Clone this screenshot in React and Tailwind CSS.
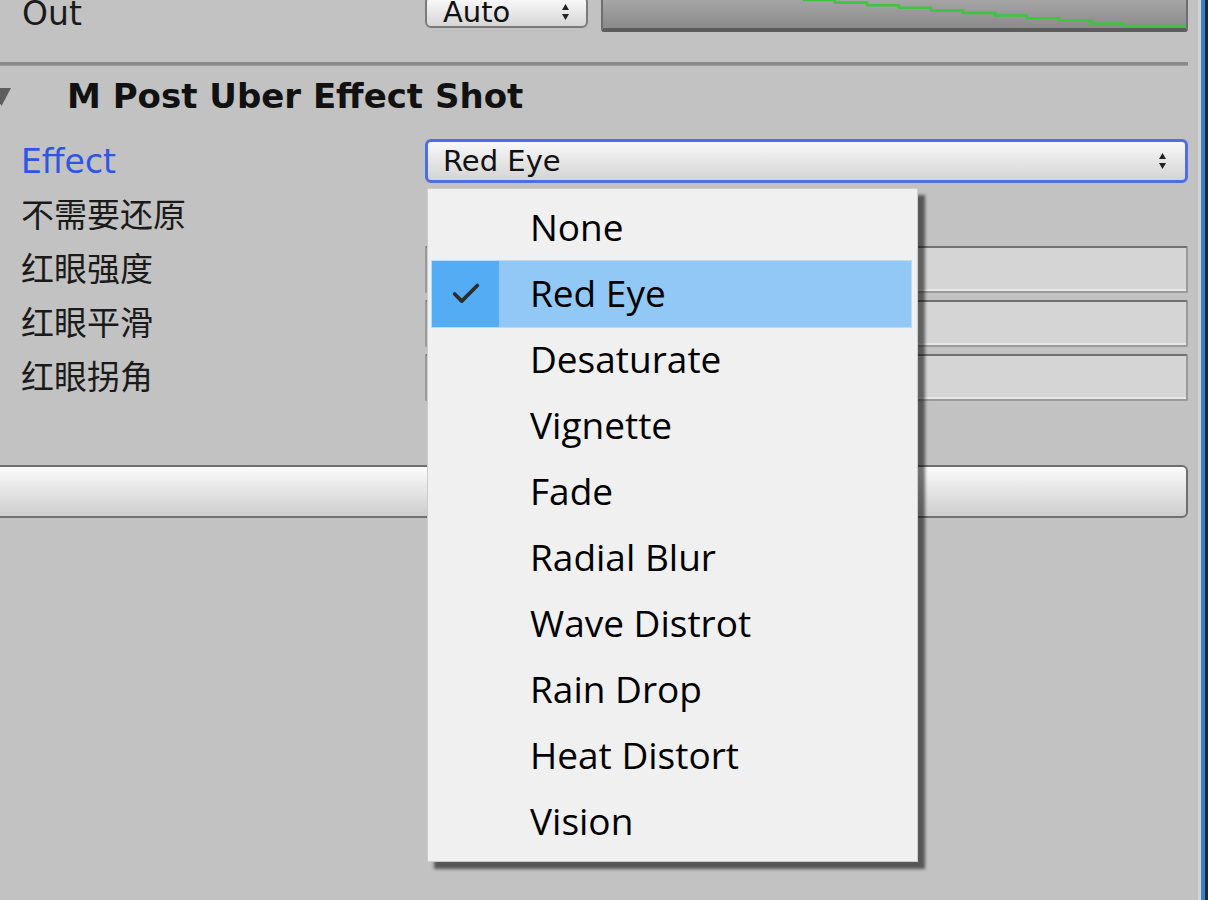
import { Check } from 'lucide-react'

const EFFECTS = [
  'None',
  'Red Eye',
  'Desaturate',
  'Vignette',
  'Fade',
  'Radial Blur',
  'Wave Distrot',
  'Rain Drop',
  'Heat Distort',
  'Vision',
]

const labelFont = { fontFamily: '"DejaVu Sans", "Noto Sans CJK SC", sans-serif' }

function Arrows() {
  return (
    <svg width="9" height="20" viewBox="0 0 9 20" className="shrink-0">
      <path d="M4.5 2 L8 8 L1 8 Z" fill="#222" />
      <path d="M1 12 L8 12 L4.5 18 Z" fill="#222" />
    </svg>
  )
}

function CurvePreview() {
  // stepped green curve in the Out row
  const pts = []
  let x = 200
  let y = 4
  while (x < 520) {
    pts.push(`${x},${y}`)
    x += 32
    pts.push(`${x},${y}`)
    y += 2.6
  }
  pts.push(`${x},${y}`)
  pts.push(`587,${y}`)
  return (
    <div className="flex-1 h-full rounded-[3px] border-2 border-[#6e6e6e] border-b-[4px] border-b-[#5c5c5c] bg-linear-to-b from-[#a9a9a9] to-[#8b8b8b] overflow-hidden">
      <svg width="100%" height="100%" viewBox="0 0 583 32" preserveAspectRatio="none">
        <polyline points={pts.join(' ')} fill="none" stroke="#3ec43e" strokeWidth="2.5" />
      </svg>
    </div>
  )
}

function Field() {
  return (
    <div className="flex-1 h-[47px] bg-[#d5d5d5] border-2 border-[#9a9a9a] border-t-[#707070] rounded-[2px] shadow-[inset_0_-2px_0_#e6e6e6]" />
  )
}

function Row({ label, blue, children }) {
  return (
    <div className="flex items-center h-[54px]">
      <div
        className={`w-[425px] shrink-0 pl-[21px] text-[33px] leading-none ${blue ? 'text-[#2f55e4]' : 'text-[#1a1a1a]'}`}
        style={labelFont}
      >
        {label}
      </div>
      {children}
    </div>
  )
}

function EffectMenu() {
  return (
    <div
      className="absolute left-[427px] top-[188px] w-[491px] bg-[#f0f0f0] border border-[#cdcdcd] pt-[6px] pb-[6px] pl-[4px] pr-[6px] shadow-[7px_7px_3px_rgba(0,0,0,0.55)] z-10"
      style={{ fontFamily: '"Open Sans", "Noto Sans", sans-serif' }}
    >
      {EFFECTS.map((name) => {
        const selected = name === 'Red Eye'
        return (
          <div
            key={name}
            className={`flex items-center h-[66px] ${selected ? 'bg-[#92c8f6] outline outline-1 outline-[#b9dcf8]' : ''}`}
          >
            <div
              className={`w-[67px] h-full flex items-center justify-center ${selected ? 'bg-[#54acf5]' : ''}`}
            >
              {selected && <Check size={34} strokeWidth={2.6} className="text-[#2b2b2b]" />}
            </div>
            <span className="pl-[31px] -mt-[4px] text-[37px] text-black leading-none">{name}</span>
          </div>
        )
      })}
    </div>
  )
}

export default function App() {
  return (
    <div className="w-[1208px] h-[900px] overflow-hidden bg-[#c2c2c2] flex">
      <div className="relative w-[1198px] shrink-0 pr-[10px] flex flex-col">
        {/* Out row, cut by the top edge */}
        <div className="flex h-[38px] -mt-[6px]">
          <div className="w-[425px] shrink-0 pl-[22px] flex items-center text-[33px] text-[#1a1a1a] leading-none" style={labelFont}>
            Out
          </div>
          <div className="w-[163px] h-[32px] mt-[2px] shrink-0 flex items-center justify-between px-[16px] rounded-[6px] border-2 border-[#7a7a7a] bg-linear-to-b from-[#fbfbfb] to-[#d6d6d6]">
            <span className="text-[29px] leading-none text-[#111]" style={labelFont}>Auto</span>
            <Arrows />
          </div>
          <div className="w-[13px] shrink-0" />
          <CurvePreview />
        </div>

        <div className="mt-[30px] h-[4px] bg-[#8a8a8a] border-b border-[#9c9c9c]" />

        {/* component header */}
        <div className="flex items-center h-[68px]">
          <svg width="12" height="22" viewBox="0 0 12 22" className="shrink-0 -mt-[6px]">
            <path d="M-8 2 L11 2 L1.5 20 Z" fill="#5e5e5e" />
          </svg>
          <span
            className="ml-[55px] -mt-[8px] text-[34px] font-bold leading-none text-[#111]"
            style={{ fontFamily: '"DejaVu Sans", sans-serif' }}
          >
            M Post Uber Effect Shot
          </span>
        </div>

        <Row label="Effect" blue>
          <div className="flex-1 h-[44px] flex items-center justify-between pl-[15px] pr-[18px] rounded-[6px] border-[3px] border-[#4f6ee2] bg-linear-to-b from-[#f8f8f8] to-[#d4d4d4]">
            <span className="text-[29px] leading-none text-[#111]" style={labelFont}>Red Eye</span>
            <Arrows />
          </div>
        </Row>
        <Row label="不需要还原" />
        <Row label="红眼强度">
          <Field />
        </Row>
        <Row label="红眼平滑">
          <Field />
        </Row>
        <Row label="红眼拐角">
          <Field />
        </Row>

        <div className="mt-[61px] -ml-[10px] h-[53px] rounded-r-[6px] border-2 border-[#6f6f6f] bg-linear-to-b from-[#fbfbfb] to-[#cdcdcd]" />

        <EffectMenu />
      </div>
      <div className="w-[3px] shrink-0 bg-[#d2d2d2]" />
      <div className="w-[4px] shrink-0 bg-[#3d7fc6]" />
      <div className="flex-1 bg-[#1e2836]" />
    </div>
  )
}
